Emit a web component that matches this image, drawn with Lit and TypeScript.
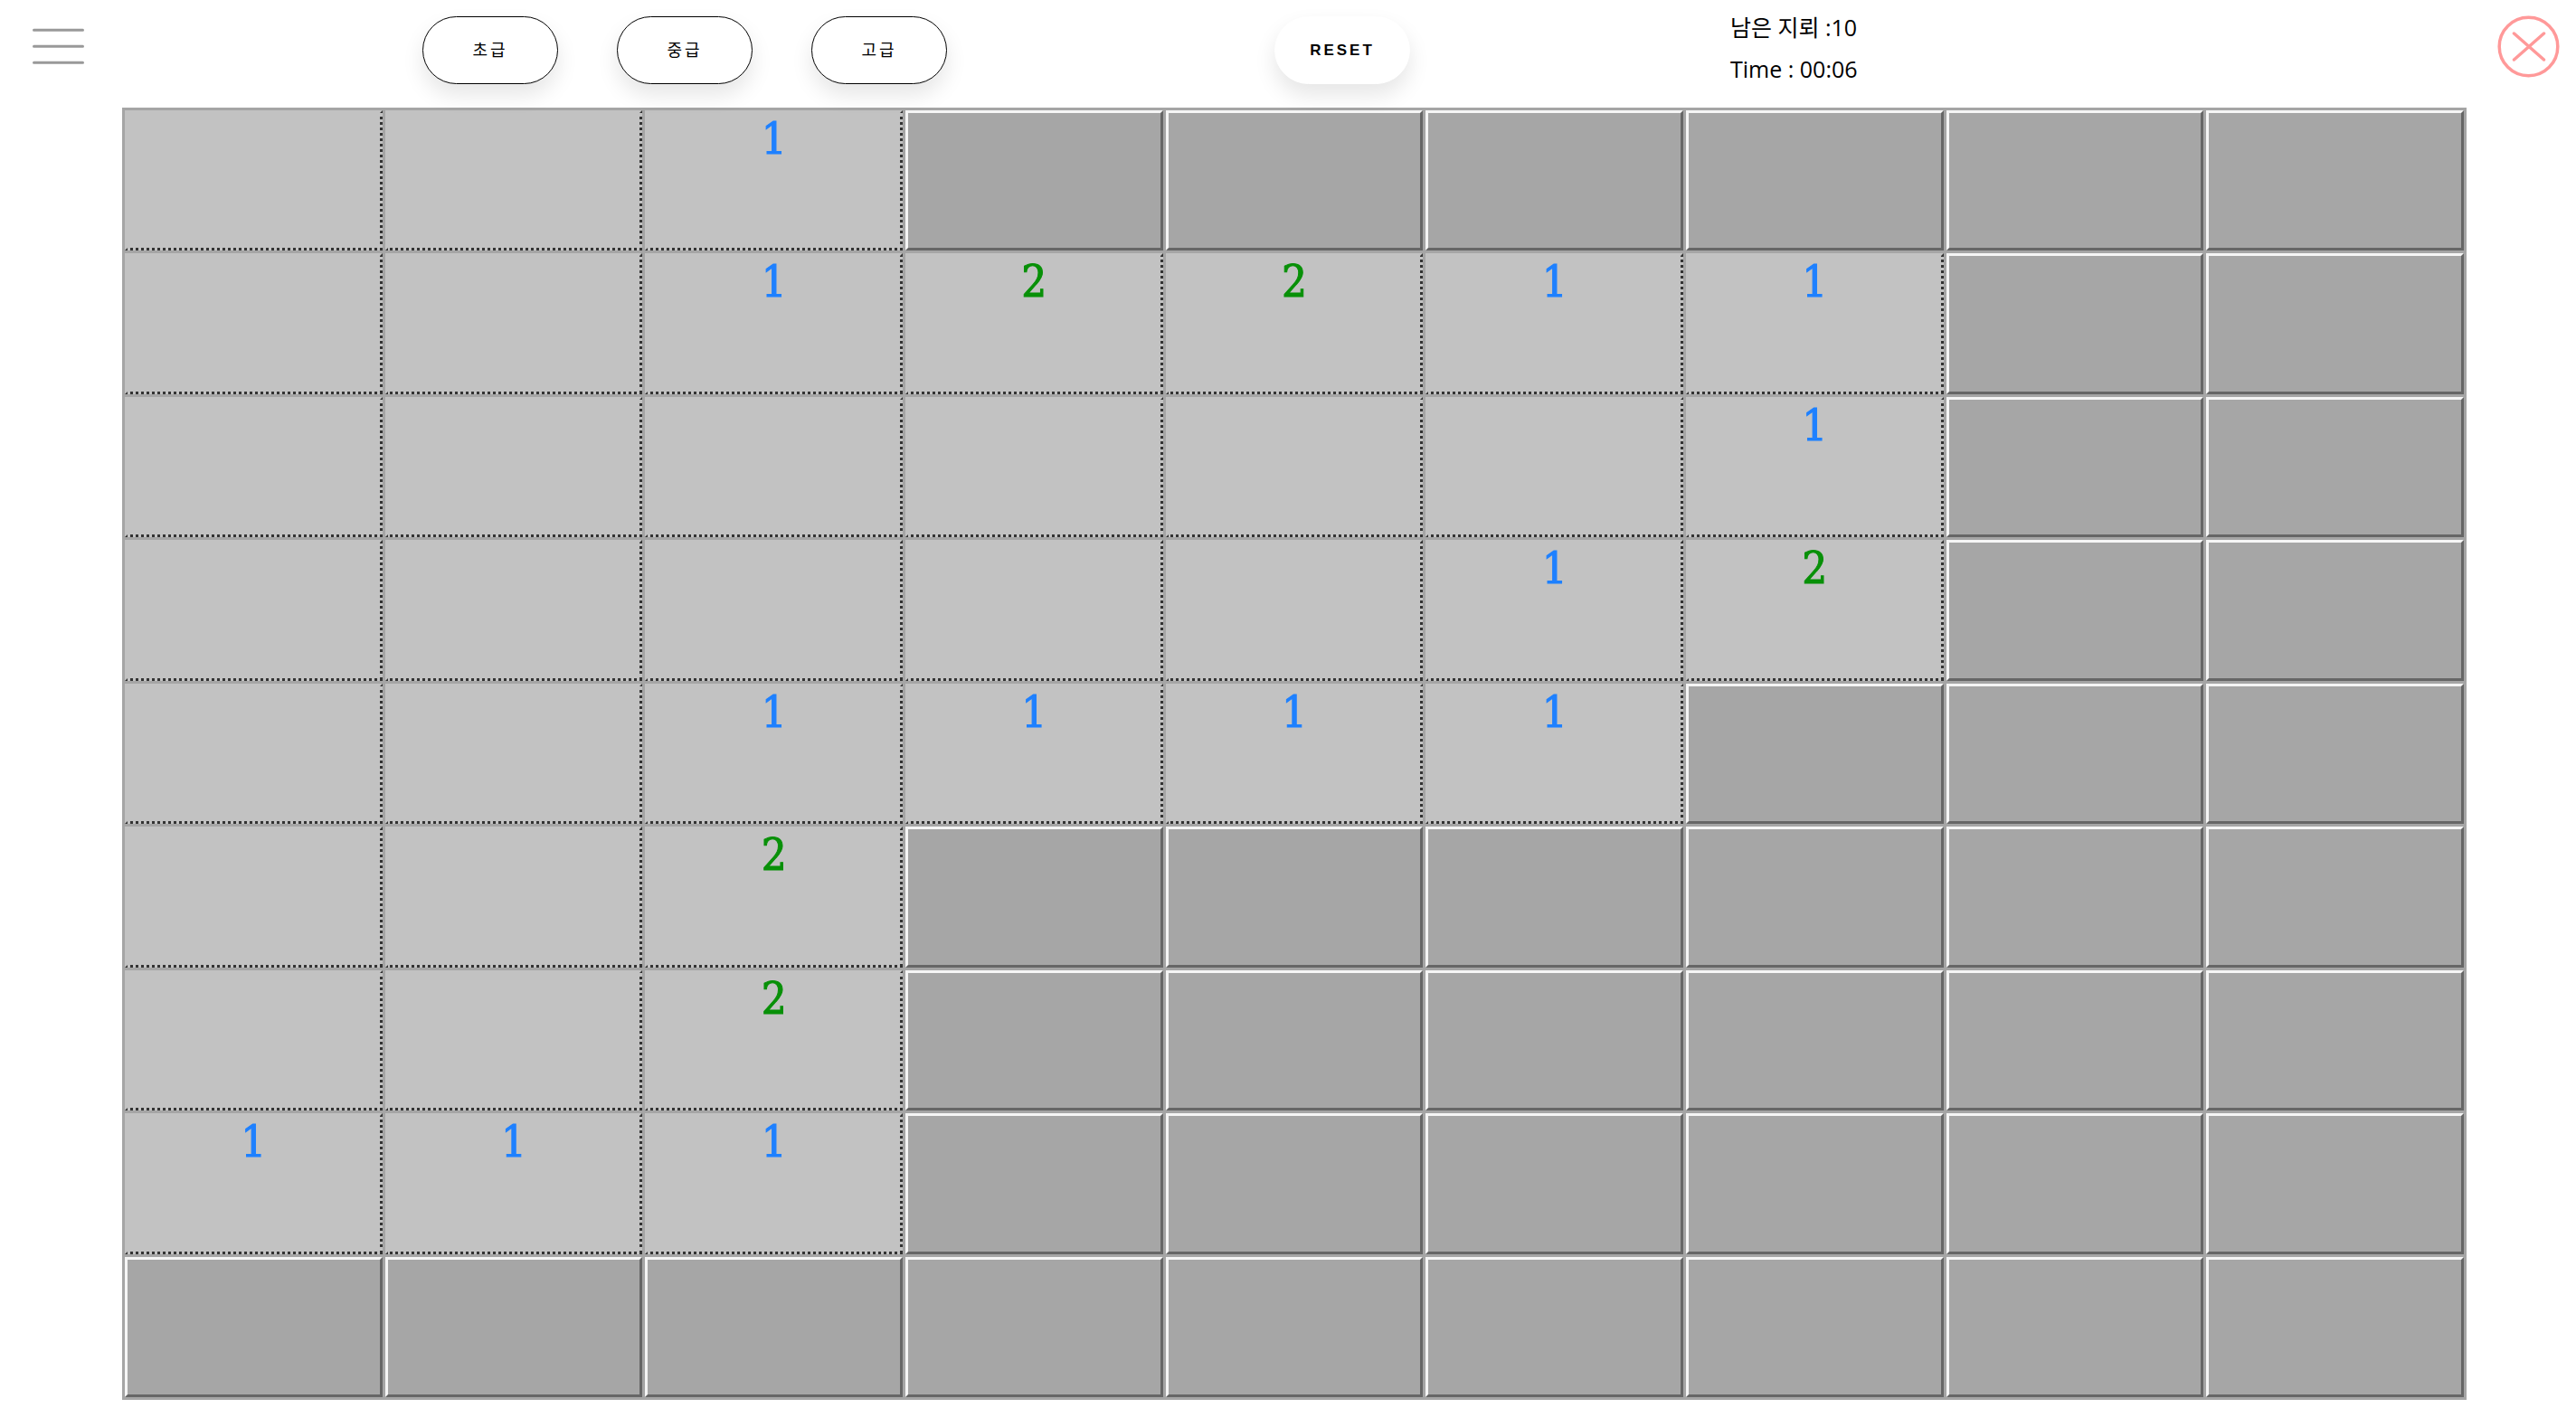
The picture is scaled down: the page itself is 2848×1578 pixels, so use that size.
import { LitElement, html, css, nothing } from "lit";
import { customElement, property, state } from "lit/decorators.js";
import { classMap } from "lit/directives/class-map.js";

// "#" covered, "." open and empty, a digit is the count of adjacent mines.
const START = [
  "..1######",
  "..12211##",
  "......1##",
  ".....12##",
  "..1111###",
  "..2######",
  "..2######",
  "111######",
  "#########",
];

@customElement("mine-cell")
class MineCell extends LitElement {
  @property() value = "#";
  @property() label = "";

  static styles = css`
    :host {
      display: grid;
      min-width: 0;
    }
    .cell {
      display: flex;
      justify-content: center;
      align-items: flex-start;
      box-sizing: border-box;
      width: 100%;
      margin: 0;
      padding: 0;
      border: 3px solid;
      border-color: #f5f5f5 #666 #666 #f5f5f5;
      background: #a6a6a6;
      font: 49px/57px "DejaVu Serif Condensed", "DejaVu Serif", serif;
      -webkit-text-stroke-width: 1px;
    }
    .open {
      border-style: solid dotted dotted solid;
      border-color: #c2c2c2 #333 #333 #c2c2c2;
      background: #c2c2c2;
    }
    .one {
      color: #1e80ff;
    }
    .two {
      color: #089008;
    }
  `;

  render() {
    const v = this.value;
    return html`<button
      type="button"
      aria-label=${this.label}
      class=${classMap({ cell: true, open: v !== "#", one: v === "1", two: v === "2" })}
    >${v === "#" || v === "." ? nothing : v}</button>`;
  }
}

@customElement("app-root")
class AppRoot extends LitElement {
  @state() rows = START;
  @state() mines = 10;
  @state() time = "00:06";

  static styles = css`
    :host {
      display: block;
      min-height: 100vh;
      background: #fff;
      color: #000;
      font-family: "Open Sans", "Noto Sans CJK KR", sans-serif;
    }
    .bar {
      position: relative;
      z-index: 1;
      display: grid;
      grid-template-columns: 431fr 942fr 504fr 848fr 69px;
      align-items: start;
      height: 119px;
      box-sizing: border-box;
      padding: 17px 18px 0 36px;
      pointer-events: none;
    }
    .bar button {
      pointer-events: auto;
    }
    .icon {
      display: block;
      padding: 0;
      border: 0;
      background: none;
      cursor: pointer;
    }
    .icon svg {
      display: block;
      fill: none;
      stroke-linecap: round;
    }
    .levels {
      display: flex;
      gap: 65px;
      padding-top: 1px;
    }
    .reset {
      padding-top: 1px;
    }
    .pill {
      width: 150px;
      height: 75px;
      padding: 0 0 3px;
      border: 1px solid #000;
      border-radius: 45px;
      background: #fff;
      color: #000;
      box-shadow: 0 12px 23px rgba(0, 0, 0, 0.1);
      font: 400 18px "Liberation Sans", "Noto Sans CJK KR", sans-serif;
      letter-spacing: 3px;
      cursor: pointer;
    }
    .plain {
      padding: 0;
      border-color: #fff;
      font-size: 17px;
      font-weight: 700;
    }
    .info {
      display: grid;
      grid-auto-rows: 46px;
      font-size: 25px;
      line-height: 26px;
    }
    .board {
      display: grid;
      grid-template-columns: repeat(9, minmax(0, 1fr));
      grid-auto-rows: 1fr;
      gap: 3px;
      box-sizing: border-box;
      min-height: calc(100vh - 149px);
      margin: 0 121px 0 135px;
      padding: 3px;
      background: #a5a5a5;
    }
  `;

  private restart() {
    this.rows = START.map(() => "#########");
    this.time = "00:00";
  }

  render() {
    return html`
      <header class="bar">
        <button class="icon" type="button" aria-label="Menu">
          <svg width="57" height="69" viewBox="0 0 57 69" stroke="#999" stroke-width="3">
            <path d="M1.5 16.3h54M1.5 34.3h54M1.5 52.3h54" />
          </svg>
        </button>
        <nav class="levels">
          ${["초급", "중급", "고급"].map((t) => html`<button class="pill" type="button">${t}</button>`)}
        </nav>
        <div class="reset">
          <button class="pill plain" type="button" @click=${this.restart}>RESET</button>
        </div>
        <div class="info">
          <span>남은 지뢰 :${this.mines}</span>
          <span>Time : ${this.time}</span>
        </div>
        <button class="icon" type="button" aria-label="Close">
          <svg width="69" height="69" viewBox="0 0 69 69" stroke="#ff9999" stroke-width="3.5">
            <circle cx="34.5" cy="34.5" r="32.3" />
            <path d="M18.5 20l33 29M51.5 20l-33 29" />
          </svg>
        </button>
      </header>
      <main class="board">
        ${this.rows.map((row, y) =>
          [...row].map(
            (v, x) => html`<mine-cell .value=${v} .label=${`${y + 1}, ${x + 1}`}></mine-cell>`
          )
        )}
      </main>
    `;
  }
}
